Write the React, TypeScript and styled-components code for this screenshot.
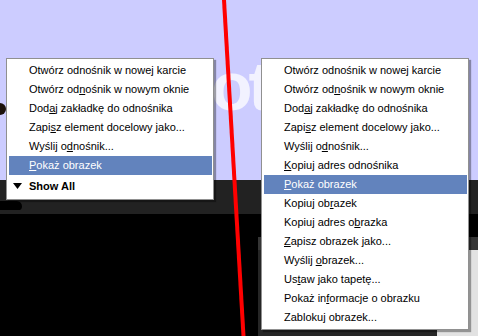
import styled, { createGlobalStyle } from "styled-components";
import React from "react";

const GlobalStyle = createGlobalStyle`
  html, body {
    margin: 0;
    padding: 0;
    background: #000;
  }
  body {
    font-family: "Liberation Sans", Arial, sans-serif;
  }
`;

type Item = { label: React.ReactNode; active?: boolean };

const linkItems: Item[] = [
  { label: <>Otwórz odnośnik w nowe<u>j</u> karcie</> },
  { label: <>Otwórz od<u>n</u>ośnik w nowym oknie</> },
  { label: <>Dod<u>a</u>j zakładkę do odnośnika</> },
  { label: <>Zapi<u>s</u>z element docelowy jako...</> },
  { label: <>Wyślij o<u>d</u>nośnik...</> },
];

const leftItems: Item[] = [
  ...linkItems,
  { label: <><u>P</u>okaż obrazek</>, active: true },
];

const rightItems: Item[] = [
  ...linkItems,
  { label: <><u>K</u>opiuj adres odnośnika</> },
  { label: <><u>P</u>okaż obrazek</>, active: true },
  { label: <>Kopiuj ob<u>r</u>azek</> },
  { label: <>Kopiuj adres o<u>b</u>razka</> },
  { label: <><u>Z</u>apisz obrazek jako...</> },
  { label: <>Wyślij <u>o</u>brazek...</> },
  { label: <>Us<u>t</u>aw jako tapetę...</> },
  { label: <>Pokaż in<u>f</u>ormacje o obrazku</> },
  { label: <>Zablokuj obrazek...</> },
];

export default function App() {
  return (
    <>
      <GlobalStyle />
      <Page>
        <Header>
          <LogoDot />
          <Heading>Photos</Heading>
        </Header>
        <Toolbar>
          <ToolIcon />
        </Toolbar>
        <Main>
          <Stage />
          <SidePanel>
            <SideGap />
            <SideBar />
            <SideBody>
              <SideDark />
              <SideLight />
            </SideBody>
          </SidePanel>
        </Main>

        <Menu $left={6}>
          {leftItems.map((it, i) => (
            <MenuItem key={i} $active={it.active}>
              {it.label}
            </MenuItem>
          ))}
          <ShowAll>
            <Arrow width="9" height="6" viewBox="0 0 9 6">
              <polygon points="0,0 9,0 4.5,6" fill="#000" />
            </Arrow>
            Show All
          </ShowAll>
        </Menu>

        <Menu $left={261}>
          {rightItems.map((it, i) => (
            <MenuItem key={i} $active={it.active}>
              {it.label}
            </MenuItem>
          ))}
        </Menu>

        <Divider width="478" height="336" viewBox="0 0 478 336">
          <line x1="224" y1="0" x2="243.5" y2="336" stroke="#ff0000" strokeWidth="4" />
        </Divider>
      </Page>
    </>
  );
}

const Page = styled.div`
  position: relative;
  width: 478px;
  height: 336px;
  overflow: hidden;
  background: #000;
  display: flex;
  flex-direction: column;
`;

const Header = styled.div`
  height: 180px;
  background: #ccccff;
  display: flex;
  align-items: flex-start;
  overflow: hidden;
`;

const LogoDot = styled.div`
  flex: none;
  width: 12px;
  height: 12px;
  margin: 103px 0 0 -6px;
  border-radius: 50%;
  background: #1c120c;
`;

const Heading = styled.h1`
  margin: 52px 0 0 126px;
  font-family: "Liberation Sans", Arial, sans-serif;
  font-size: 68px;
  line-height: 1;
  font-weight: 700;
  letter-spacing: -4px;
  color: #f2f2ff;
  white-space: nowrap;
`;

const Toolbar = styled.div`
  height: 34px;
  background: #222222;
  display: flex;
  align-items: flex-end;
  padding-bottom: 4px;
  box-sizing: border-box;
`;

const ToolIcon = styled.div`
  width: 22px;
  height: 9px;
  border-radius: 0 6px 4px 0;
  background: #000;
`;

const Main = styled.div`
  flex: 1;
  display: flex;
`;

const Stage = styled.div`
  flex: 1;
  background: #000;
`;

const SidePanel = styled.div`
  width: 220px;
  display: flex;
  flex-direction: column;
`;

const SideGap = styled.div`
  height: 23px;
  background: #000;
`;

const SideBar = styled.div`
  height: 13px;
  background: #353535;
`;

const SideBody = styled.div`
  flex: 1;
  display: flex;
`;

const SideDark = styled.div`
  width: 179px;
  background: #262626;
`;

const SideLight = styled.div`
  flex: 1;
  background: #e2e2e2;
`;

const Menu = styled.div<{ $left: number }>`
  position: absolute;
  top: 58px;
  left: ${(p) => p.$left}px;
  width: 208px;
  box-sizing: border-box;
  padding: 2px 1px 2px 2px;
  background: #fff;
  border: 1px solid #909090;
  box-shadow: 2px 2px 1px rgba(0, 0, 0, 0.35);
  font-family: "Liberation Sans", Arial, sans-serif;
  font-size: 11px;
  color: #000;
`;

const MenuItem = styled.div<{ $active?: boolean }>`
  height: 19px;
  line-height: 19px;
  padding-left: 20px;
  white-space: nowrap;
  background: ${(p) => (p.$active ? "#6283bd" : "transparent")};
  color: ${(p) => (p.$active ? "#fff" : "#000")};

  u {
    text-underline-offset: 1px;
  }
`;

const ShowAll = styled.div`
  height: 22px;
  display: flex;
  align-items: center;
  gap: 7px;
  padding-left: 4px;
  font-weight: 700;
  font-size: 11px;
`;

const Arrow = styled.svg`
  display: block;
`;

const Divider = styled.svg`
  position: absolute;
  left: 0;
  top: 0;
  pointer-events: none;
`;
